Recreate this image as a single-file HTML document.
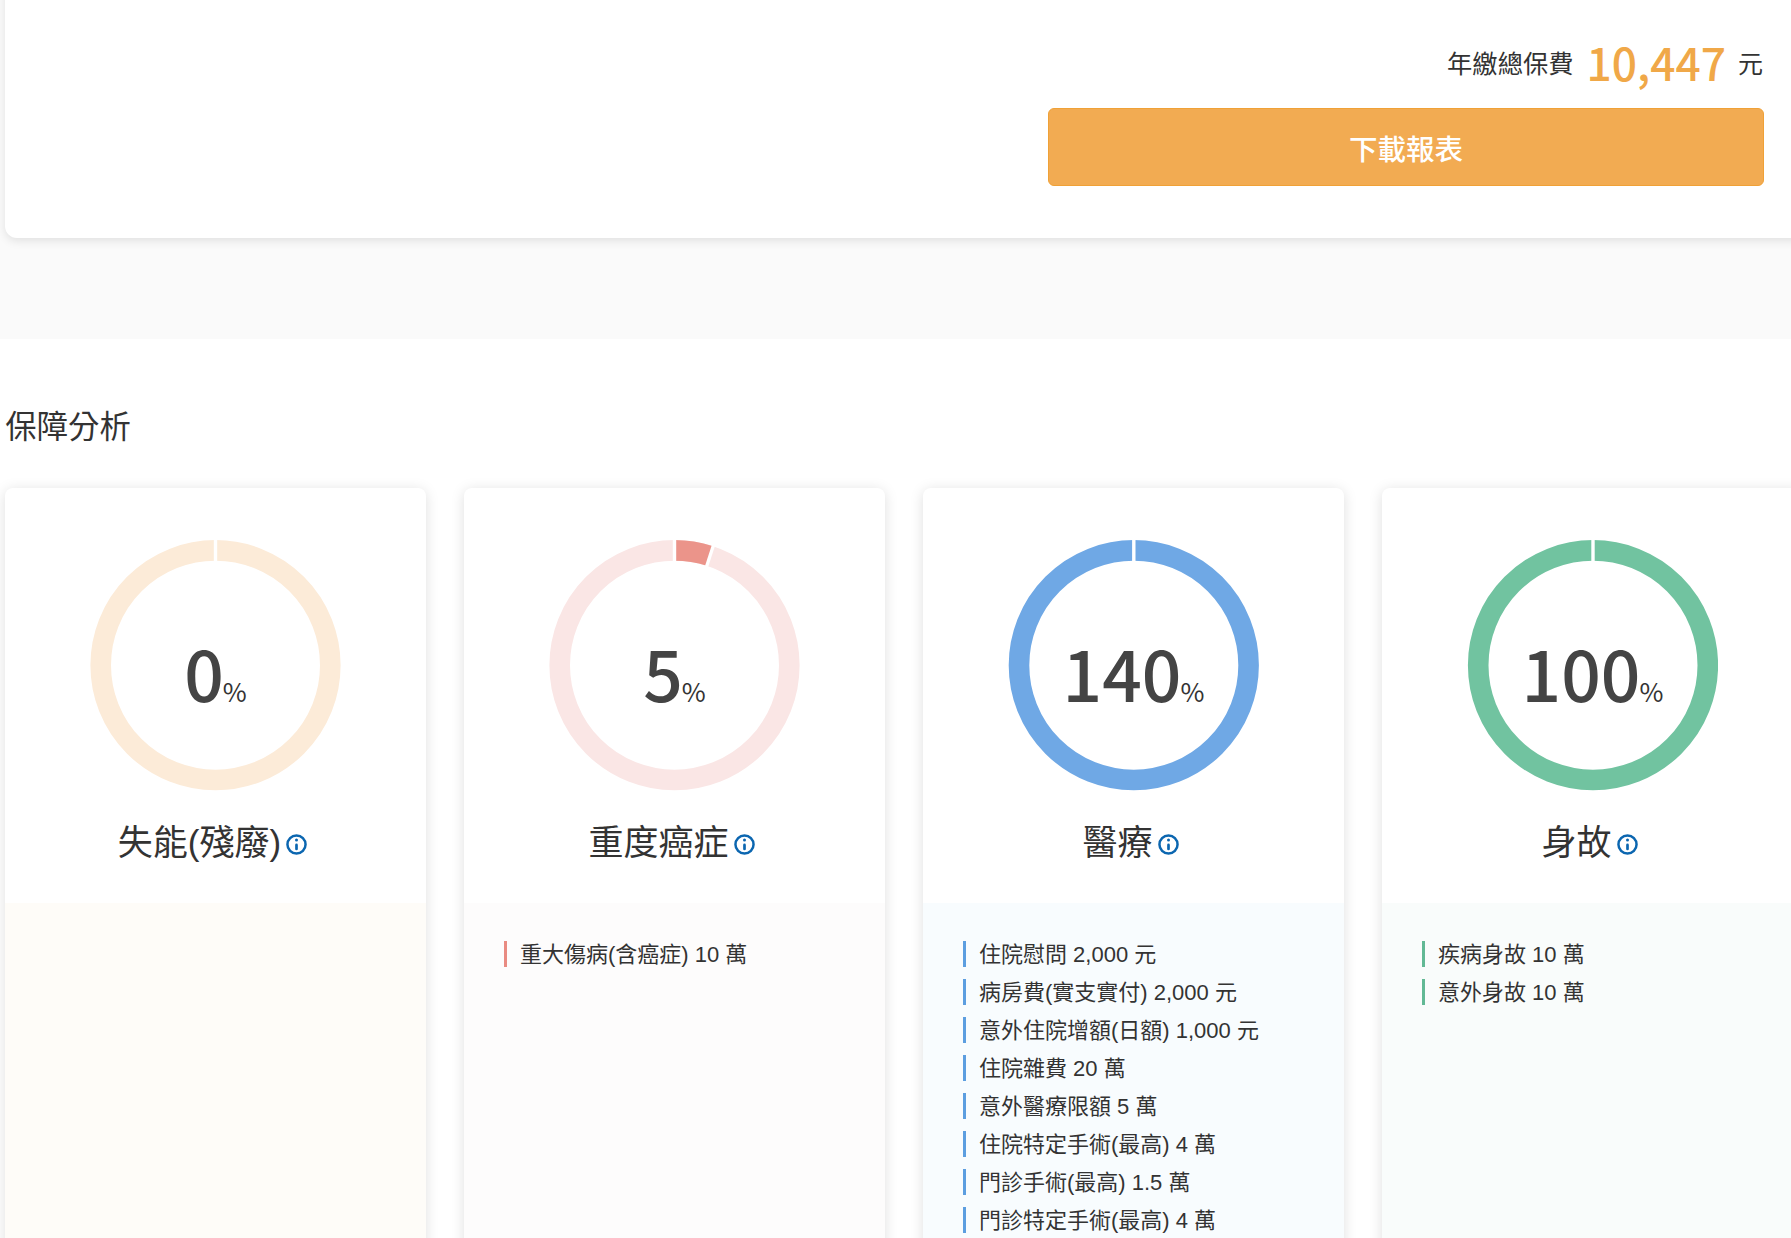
<!DOCTYPE html>
<html lang="zh-Hant">
<head>
<meta charset="utf-8">
<title>保障分析</title>
<style>
*{box-sizing:border-box;margin:0;padding:0}
html,body{width:1791px;height:1238px;overflow:hidden;background:#fff}
body{position:relative;font-family:"Liberation Sans","Noto Sans CJK TC",sans-serif;color:#333}
.num{font-family:"Noto Sans CJK TC","Liberation Sans",sans-serif}
.topbg{position:absolute;left:0;top:0;width:1791px;height:339px;background:#fafafa}
.topcard{position:absolute;left:5px;top:-20px;width:1810px;height:258px;background:#fff;border-radius:0 0 0 12px;box-shadow:0 3px 10px rgba(0,0,0,.1)}
.fee{position:absolute;right:28px;top:28px;height:52px;white-space:nowrap;display:flex;align-items:baseline}
.fee .lbl{font-size:25.3px;color:#333}
.fee .amt{font-size:44.3px;font-weight:500;color:#f0a848;margin:0 12px 0 13px;line-height:52px;position:relative;top:8px}
.fee .unit{font-size:25px;color:#333}
.btn{position:absolute;left:1048px;top:108px;width:716px;height:78px;background:#f2ab52;border:1px solid #f0a137;border-radius:6px;color:#fff;font-size:28.5px;font-weight:500;text-align:center;line-height:82px}
h2{position:absolute;left:5.3px;top:405px;font-size:31.4px;font-weight:400;line-height:46px;color:#333}
.card{position:absolute;top:488px;width:421px;height:800px;background:#fff;border-radius:8px 8px 0 0;box-shadow:0 2px 14px rgba(0,0,0,.13);overflow:hidden}
.c1{left:5px}.c2{left:464px}.c3{left:923px}.c4{left:1382px}
.card svg.ring{position:absolute;left:85px;top:52px;width:251px;height:251px}
.pct{position:absolute;left:0px;top:138.5px;width:421px;text-align:center;color:#444;line-height:90px;white-space:nowrap}
.pct b{font-size:69.5px;font-weight:500}
.pct i{font-size:26px;font-style:normal;font-weight:400;color:#333;margin-left:-1px}
.ttl{position:absolute;left:-3px;top:330px;width:421px;text-align:center;font-size:35px;font-weight:400;line-height:50px;color:#333;white-space:nowrap}
.ttl .info{display:inline-block;width:21px;height:21px;margin-left:5px;vertical-align:0px}
.det{position:absolute;left:0;top:415px;width:421px;height:400px;padding:38px 0 0 40px}
.c1 .det{background:#fefcf8}.c2 .det{background:#fdfcfc}.c3 .det{background:#f8fcfe}.c4 .det{background:#f9fcfb}
.det p{font-size:22px;line-height:28px;height:26px;margin-bottom:12px;padding-left:13px;border-left:3px solid #999;white-space:nowrap;color:#333}
.c2 .det p{border-color:#e98b82}.c3 .det p{border-color:#5c9ee0}.c4 .det p{border-color:#62b995}
</style>
</head>
<body>
<div class="topbg"></div>
<div class="topcard"></div>
<div class="fee"><span class="lbl">年繳總保費</span><span class="amt num">10,447</span><span class="unit">元</span></div>
<div class="btn">下載報表</div>
<h2>保障分析</h2>

<div class="card c1">
  <svg class="ring" viewBox="0 0 251 251"><circle cx="125.5" cy="125.2" r="114.8" fill="none" stroke="#fcebd8" stroke-width="20.6"/><rect x="123.8" y="-2" width="3.4" height="26" fill="#fff"/></svg>
  <div class="pct num"><b>0</b><i>%</i></div>
  <div class="ttl">失能(殘廢)<svg class="info" viewBox="0 0 21 21"><circle cx="10.5" cy="10.5" r="9.05" fill="none" stroke="#0b66b0" stroke-width="2.5"/><path d="M10.5 10.9V14.9" stroke="#0b66b0" stroke-width="2.7" stroke-linecap="round"/><circle cx="10.5" cy="6.1" r="1.5" fill="#0b66b0"/></svg></div>
  <div class="det"></div>
</div>

<div class="card c2">
  <svg class="ring" viewBox="0 0 251 251"><circle cx="125.5" cy="125.2" r="114.8" fill="none" stroke="#fae6e5" stroke-width="20.6"/><path d="M125.5 0.10A125.1 125.1 0 0 1 164.16 6.22L157.79 25.81A104.5 104.5 0 0 0 125.5 20.70Z" fill="#eb948a"/><path d="M164.78 4.32L157.17 27.72" stroke="#fff" stroke-width="3.3"/><rect x="123.8" y="-2" width="3.4" height="26" fill="#fff"/></svg>
  <div class="pct num"><b>5</b><i>%</i></div>
  <div class="ttl">重度癌症<svg class="info" viewBox="0 0 21 21"><circle cx="10.5" cy="10.5" r="9.05" fill="none" stroke="#0b66b0" stroke-width="2.5"/><path d="M10.5 10.9V14.9" stroke="#0b66b0" stroke-width="2.7" stroke-linecap="round"/><circle cx="10.5" cy="6.1" r="1.5" fill="#0b66b0"/></svg></div>
  <div class="det"><p>重大傷病(含癌症) 10 萬</p></div>
</div>

<div class="card c3">
  <svg class="ring" viewBox="0 0 251 251"><circle cx="125.8" cy="125.2" r="114.8" fill="none" stroke="#6fa8e5" stroke-width="20.6"/><rect x="124.1" y="-2" width="3.4" height="26" fill="#fff"/></svg>
  <div class="pct num"><b>140</b><i>%</i></div>
  <div class="ttl">醫療<svg class="info" viewBox="0 0 21 21"><circle cx="10.5" cy="10.5" r="9.05" fill="none" stroke="#0b66b0" stroke-width="2.5"/><path d="M10.5 10.9V14.9" stroke="#0b66b0" stroke-width="2.7" stroke-linecap="round"/><circle cx="10.5" cy="6.1" r="1.5" fill="#0b66b0"/></svg></div>
  <div class="det"><p>住院慰問 2,000 元</p><p>病房費(實支實付) 2,000 元</p><p>意外住院增額(日額) 1,000 元</p><p>住院雜費 20 萬</p><p>意外醫療限額 5 萬</p><p>住院特定手術(最高) 4 萬</p><p>門診手術(最高) 1.5 萬</p><p>門診特定手術(最高) 4 萬</p></div>
</div>

<div class="card c4">
  <svg class="ring" viewBox="0 0 251 251"><circle cx="126.0" cy="125.2" r="114.8" fill="none" stroke="#71c3a0" stroke-width="20.6"/><rect x="124.3" y="-2" width="3.4" height="26" fill="#fff"/></svg>
  <div class="pct num"><b>100</b><i>%</i></div>
  <div class="ttl">身故<svg class="info" viewBox="0 0 21 21"><circle cx="10.5" cy="10.5" r="9.05" fill="none" stroke="#0b66b0" stroke-width="2.5"/><path d="M10.5 10.9V14.9" stroke="#0b66b0" stroke-width="2.7" stroke-linecap="round"/><circle cx="10.5" cy="6.1" r="1.5" fill="#0b66b0"/></svg></div>
  <div class="det"><p>疾病身故 10 萬</p><p>意外身故 10 萬</p></div>
</div>
</body>
</html>
